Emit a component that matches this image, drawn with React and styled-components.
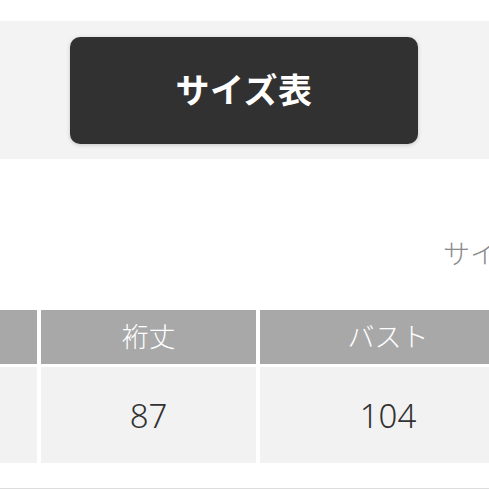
import React from "react";
import styled, { createGlobalStyle } from "styled-components";

const Global = createGlobalStyle`
  html, body { margin: 0; padding: 0; background: #ffffff; overflow: hidden; }
  body { font-family: "Noto Sans CJK JP", "Noto Sans", sans-serif; width: 489px; height: 489px; }
`;

const Page = styled.div`
  width: 489px;
  height: 489px;
  overflow: hidden;
  padding-top: 21px;
  box-sizing: border-box;
`;

const Band = styled.div`
  background: #f3f3f3;
  height: 138px;
  display: flex;
  align-items: center;
  padding-left: 70px;
  box-sizing: border-box;
`;

const SizeButton = styled.button`
  width: 348px;
  height: 107px;
  border: none;
  border-radius: 10px;
  background: #313131;
  color: #ffffff;
  font-family: "Noto Sans CJK JP", sans-serif;
  font-weight: 700;
  font-size: 34px;
  letter-spacing: 0.5px;
  box-shadow: 0 1px 4px rgba(0, 0, 0, 0.18);
  display: flex;
  align-items: center;
  justify-content: center;
  padding: 0;
  padding-bottom: 4px;
`;

const CaptionRow = styled.div`
  padding-top: 76px;
  padding-left: 443px;
  height: 36px;
  white-space: nowrap;
  overflow: hidden;
`;

const Caption = styled.span`
  font-size: 27px;
  line-height: 36px;
  color: #8a8a8a;
  font-weight: 300;
`;

const TableWrap = styled.div`
  margin-top: 39px;
  width: 489px;
  overflow: hidden;
`;

const Grid = styled.div`
  display: grid;
  grid-template-columns: 215px 215px 256px;
  grid-template-rows: 54px 96px;
  column-gap: 4px;
  row-gap: 3px;
  margin-left: -178px;
  width: max-content;
`;

const HeadCell = styled.div`
  background: #a8a8a8;
  color: #ffffff;
  font-size: 27px;
  font-weight: 300;
  display: flex;
  align-items: center;
  justify-content: center;
  padding-bottom: 4px;
  box-sizing: border-box;
`;

const DataCell = styled.div`
  background: #f2f2f2;
  color: #333333;
  font-size: 33px;
  font-weight: 300;
  display: flex;
  align-items: center;
  justify-content: center;
  font-family: "Noto Sans", "Noto Sans CJK JP", sans-serif;
`;

const BottomLine = styled.div`
  margin-top: 25px;
  height: 2px;
  background: #dddddd;
`;

export default function App() {
  return (
    <Page>
      <Global />
      <Band>
        <SizeButton>サイズ表</SizeButton>
      </Band>
      <CaptionRow>
        <Caption>サイズ(cm)</Caption>
      </CaptionRow>
      <TableWrap>
        <Grid>
          <HeadCell />
          <HeadCell>裄丈</HeadCell>
          <HeadCell>バスト</HeadCell>
          <DataCell />
          <DataCell>87</DataCell>
          <DataCell>104</DataCell>
        </Grid>
      </TableWrap>
      <BottomLine />
    </Page>
  );
}
